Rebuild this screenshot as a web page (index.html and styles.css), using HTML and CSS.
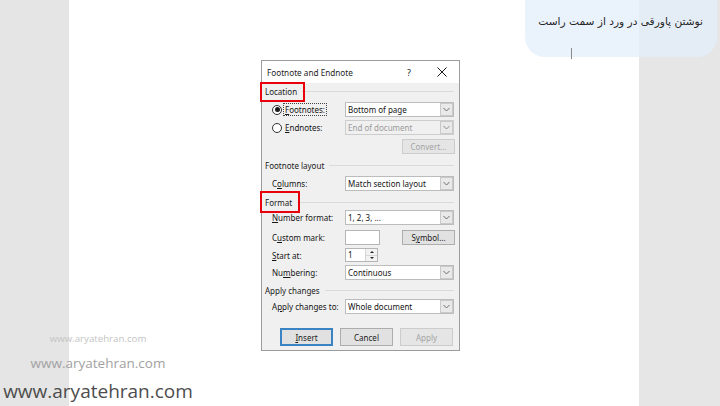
FILE: index.html
```html
<!DOCTYPE html>
<html lang="en">
<head>
<meta charset="utf-8">
<title>Footnote and Endnote</title>
<link rel="stylesheet" href="styles.css">
</head>
<body>
<div class="screen">
  <div class="gutter-left"></div>
  <main class="page">
    <div class="dialog">
      <div class="titlebar">
        <span class="title">Footnote and Endnote</span>
        <span class="help">?</span>
        <span class="close">
          <svg width="10" height="10" viewBox="0 0 10 10"><path d="M0.5 0.5 L9.5 9.5 M9.5 0.5 L0.5 9.5" stroke="#1a1a1a" stroke-width="1" fill="none"/></svg>
        </span>
      </div>
      <div class="body">
        <div class="section s-location"><span class="section-label mark mark-location">Location</span><span class="rule"></span></div>

        <div class="row r-foot">
          <span class="label radio-label"><span class="radio checked"></span><span class="focus"><u>F</u>ootnotes:</span></span>
          <div class="combo"><span class="value">Bottom of page</span><span class="arrow"><svg width="7" height="5" viewBox="0 0 7 5"><path d="M0.5 1 L3.5 4 L6.5 1" stroke="#6d6d6d" fill="none"/></svg></span></div>
        </div>

        <div class="row r-end">
          <span class="label radio-label"><span class="radio"></span><span class="plain"><u>E</u>ndnotes:</span></span>
          <div class="combo disabled"><span class="value">End of document</span><span class="arrow"><svg width="7" height="5" viewBox="0 0 7 5"><path d="M0.5 1 L3.5 4 L6.5 1" stroke="#8d8d8d" fill="none"/></svg></span></div>
        </div>

        <div class="row right r-convert">
          <span class="btn small disabled">Convert...</span>
        </div>

        <div class="section s-layout"><span class="section-label">Footnote layout</span><span class="rule"></span></div>

        <div class="row r-columns">
          <span class="label">C<u>o</u>lumns:</span>
          <div class="combo"><span class="value">Match section layout</span><span class="arrow"><svg width="7" height="5" viewBox="0 0 7 5"><path d="M0.5 1 L3.5 4 L6.5 1" stroke="#6d6d6d" fill="none"/></svg></span></div>
        </div>

        <div class="section s-format"><span class="section-label mark mark-format">Format</span><span class="rule"></span></div>

        <div class="row r-number">
          <span class="label"><u>N</u>umber format:</span>
          <div class="combo"><span class="value">1, 2, 3, ...</span><span class="arrow"><svg width="7" height="5" viewBox="0 0 7 5"><path d="M0.5 1 L3.5 4 L6.5 1" stroke="#6d6d6d" fill="none"/></svg></span></div>
        </div>

        <div class="row r-custom">
          <span class="label">C<u>u</u>stom mark:</span>
          <span class="textbox"></span>
          <span class="spacer"></span>
          <span class="btn small">S<u>y</u>mbol...</span>
        </div>

        <div class="row r-start">
          <span class="label"><u>S</u>tart at:</span>
          <span class="spin"><span class="spin-value">1</span><span class="spin-btns"><span class="spin-up"></span><span class="spin-down"></span></span></span>
        </div>

        <div class="row r-numbering">
          <span class="label">Nu<u>m</u>bering:</span>
          <div class="combo"><span class="value">Continuous</span><span class="arrow"><svg width="7" height="5" viewBox="0 0 7 5"><path d="M0.5 1 L3.5 4 L6.5 1" stroke="#6d6d6d" fill="none"/></svg></span></div>
        </div>

        <div class="section s-apply"><span class="section-label">Apply changes</span><span class="rule"></span></div>

        <div class="row r-applyto">
          <span class="label">A<u>p</u>ply changes to:</span>
          <div class="combo"><span class="value">Whole document</span><span class="arrow"><svg width="7" height="5" viewBox="0 0 7 5"><path d="M0.5 1 L3.5 4 L6.5 1" stroke="#6d6d6d" fill="none"/></svg></span></div>
        </div>

        <div class="buttons">
          <span class="btn default"><u>I</u>nsert</span>
          <span class="btn">Cancel</span>
          <span class="btn disabled">Apply</span>
        </div>
      </div>
    </div>
  </main>
  <div class="gutter-right"></div>

  <div class="bubble">
    <p class="bubble-text" dir="rtl">نوشتن پاورقی در ورد از سمت راست</p>
    <span class="caret"></span>
  </div>

  <div class="watermarks">
    <span class="wm wm-small">www.aryatehran.com</span>
    <span class="wm wm-medium">www.aryatehran.com</span>
    <span class="wm wm-large">www.aryatehran.com</span>
  </div>
</div>
</body>
</html>
```
FILE: styles.css
```css
* { box-sizing: border-box; }
html, body { margin: 0; padding: 0; }
body {
  width: 720px;
  height: 406px;
  overflow: hidden;
  background: #e6e6e6;
}
.screen {
  position: relative;
  display: flex;
  width: 720px;
  height: 406px;
  background: #e6e6e6;
}
.gutter-left { width: 69px; flex: none; background: #e5e5e5; }
.gutter-right { flex: 1; background: #e6e6e6; }
.page {
  width: 570px;
  flex: none;
  background: #ffffff;
  padding: 60px 0 0 192px;
}

/* dialog */
.dialog {
  width: 199px;
  height: 291px;
  border: 1px solid #9c9c9c;
  background: #f0f0f0;
  font-family: "Noto Sans", "Open Sans", sans-serif;
  font-size: 8px;
  color: #151515;
  display: flex;
  flex-direction: column;
}
.titlebar {
  height: 22px;
  background: #ffffff;
  display: flex;
  align-items: center;
  padding-left: 5px;
  flex: none;
}
.title { font-size: 8.2px; color: #1e1e1e; }
.help { margin-left: auto; font-size: 9px; width: 10px; margin-right: 20px; color: #222; }
.close { width: 10px; height: 10px; margin-right: 12px; display: flex; }

.body {
  padding: 0 4px 0 0;
  display: flex;
  flex-direction: column;
}
.section {
  display: flex;
  align-items: center;
  height: 12px;
  padding-left: 3px;
}
.section-label { white-space: nowrap; color: #1a1a1a; }
.rule { flex: 1; height: 1px; background: #dadada; margin-left: 5px; margin-right: 1px; }

.mark { position: relative; }
.mark::after {
  content: "";
  position: absolute;
  border: 2px solid #e8000c;
}
.mark-location::after { top: -4px; bottom: -5px; left: -5px; right: -8px; }
.mark-format::after { top: -6px; bottom: -5px; left: -5px; right: -8px; }

.s-location { margin-top: 2px; }
.r-foot { margin-top: 5px; }
.r-end { margin-top: 3px; }
.r-convert { margin-top: 4px; }
.s-layout { margin-top: 5px; }
.r-columns { margin-top: 5px; }
.s-format { margin-top: 5px; }
.r-number { margin-top: 2px; }
.r-custom { margin-top: 5px; }
.r-start { margin-top: 3px; height: 14px !important; }
.r-numbering { margin-top: 3px; }
.s-apply { margin-top: 4px; }
.r-applyto { margin-top: 3px; }

.row {
  display: flex;
  align-items: center;
  height: 15px;
  padding-left: 10px;
}
.row.right { justify-content: flex-end; }
.label {
  width: 73px;
  flex: none;
  white-space: nowrap;
  display: flex;
  align-items: center;
}
.radio-label { gap: 2px; }
.radio {
  width: 10px;
  height: 10px;
  border-radius: 50%;
  border: 1px solid #333;
  background: #fff;
  flex: none;
  display: flex;
  align-items: center;
  justify-content: center;
}
.radio.checked::before {
  content: "";
  width: 5px;
  height: 5px;
  border-radius: 50%;
  background: #1a1a1a;
}
.focus { outline: 1px dotted #444; outline-offset: 0; padding: 0 1px; line-height: 11px; }
.plain { padding: 0 1px; }

.combo {
  width: 109px;
  height: 15px;
  flex: none;
  border: 1px solid #bcbcbc;
  background: #fff;
  display: flex;
  align-items: stretch;
}
.combo .value { flex: 1; padding-left: 2px; line-height: 13px; white-space: nowrap; overflow: hidden; }
.combo .arrow {
  width: 13px;
  border: 1px solid #c9c9c9;
  background: #e9e9e9;
  display: flex;
  align-items: center;
  justify-content: center;
}
.combo.disabled { background: #f0f0f0; border-color: #cdcdcd; }
.combo.disabled .value { color: #9b9b9b; }
.combo.disabled .arrow { background: #e9e9e9; }

.textbox {
  width: 35px;
  height: 15px;
  border: 1px solid #b5b5b5;
  background: #fff;
  flex: none;
}
.spacer { flex: 1; }

.spin {
  width: 33px;
  height: 14px;
  border: 1px solid #b5b5b5;
  background: #fff;
  display: flex;
  flex: none;
}
.spin-value { flex: 1; padding-left: 2px; line-height: 12px; }
.spin-btns { width: 12px; display: flex; flex-direction: column; border-left: 1px solid #d5d5d5; }
.spin-up, .spin-down {
  flex: 1;
  background: #f2f2f2;
  display: flex;
  align-items: center;
  justify-content: center;
}
.spin-up { border-bottom: 1px solid #d5d5d5; }
.spin-up::before {
  content: "";
  border-left: 2px solid transparent;
  border-right: 2px solid transparent;
  border-bottom: 2px solid #222;
}
.spin-down::before {
  content: "";
  border-left: 2px solid transparent;
  border-right: 2px solid transparent;
  border-top: 2px solid #222;
}

.btn {
  width: 53px;
  height: 18px;
  flex: none;
  border: 1px solid #adadad;
  background: #e1e1e1;
  display: flex;
  align-items: center;
  justify-content: center;
  color: #1b1b1b;
}
.btn.small { height: 15px; }
.btn.disabled { color: #a3a3a3; border-color: #cccccc; background: #e5e5e5; }
.btn.default { border: 1px solid #3b84c4; box-shadow: inset 0 0 0 1px #3b84c4; }

.buttons {
  display: flex;
  gap: 7px;
  padding-left: 18px;
  margin-top: 14px;
}

/* speech bubble overlay */
.bubble {
  position: absolute;
  top: 0;
  left: 525px;
  width: 192px;
  height: 57px;
  border-radius: 0 0 20px 20px;
  background: rgba(227, 238, 251, 0.76);
}
.bubble-text {
  margin: 0;
  padding: 15px 14px 0 0;
  font-family: "DejaVu Sans", sans-serif;
  font-size: 10.6px;
  color: #262626;
  text-align: right;
  white-space: nowrap;
}
.caret {
  position: absolute;
  left: 46px;
  top: 48px;
  width: 1px;
  height: 11px;
  background: #8a8a8a;
}

/* watermarks */
.watermarks {
  position: absolute;
  left: 0;
  bottom: 0;
  width: 196px;
  display: flex;
  flex-direction: column;
  align-items: center;
  font-family: "Open Sans", sans-serif;
  line-height: 1;
  padding-bottom: 5px;
}
.wm { white-space: nowrap; }
.wm-small { font-size: 9.7px; color: #c4c4c4; margin-bottom: 13px; }
.wm-medium { font-size: 13.5px; color: #a2a2a2; margin-bottom: 12px; }
.wm-large { font-size: 19px; color: #4d4d4d; }
```
